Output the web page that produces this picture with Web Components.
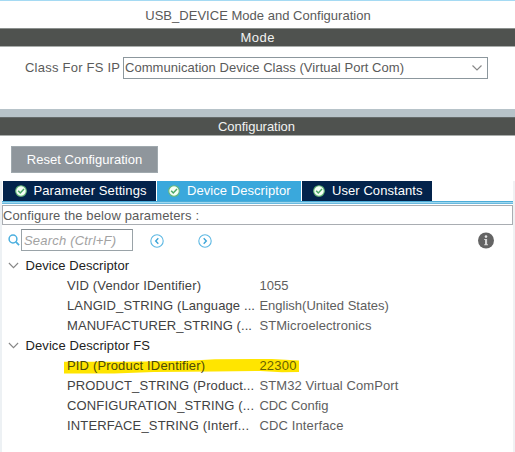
<!DOCTYPE html>
<html lang="en">
<head>
<meta charset="utf-8">
<title>USB_DEVICE Mode and Configuration</title>
<style>
html,body{margin:0;width:515px;height:452px;overflow:hidden;background:#fff}
body{font:13px/20px "Liberation Sans",Arial,sans-serif;color:#5a5a5a}
</style>
</head>
<body>
<config-app></config-app>
<script>
const define = (name, html, setup) => {
  const tpl = document.createElement('template');
  tpl.innerHTML = html;
  customElements.define(name, class extends HTMLElement {
    constructor() {
      super();
      this.attachShadow({mode: 'open'}).append(tpl.content.cloneNode(true));
    }
    connectedCallback() { if (setup) setup(this, this.shadowRoot); }
  });
};

// Label whose tracking is spread so that the text fills the given width.
define('tracked-text', `<style>:host{display:block;white-space:pre;flex:none}span{display:inline-block}</style><span><slot></slot></span>`,
  (el, root) => {
    const span = root.querySelector('span');
    const target = +el.getAttribute('w');
    span.style.letterSpacing = '0';
    const n = el.textContent.length;
    const natural = span.getBoundingClientRect().width;
    const gap = (target - natural) / (n - 1);
    span.style.letterSpacing = gap + 'px';
    span.style.marginRight = -gap + 'px';
  });

define('section-bar', `<style>:host{display:flex;justify-content:center;align-items:center;height:19px;box-sizing:border-box;background:#4f524f;color:#f2f2f2;border-top:1px solid var(--edge,#8b908e);border-bottom:1px solid #a9adab}</style><slot></slot>`);

define('combo-box', `<style>:host{display:flex;align-items:center;justify-content:space-between;width:365px;height:22px;box-sizing:border-box;border:1px solid #8c979d;padding:0 4px 0 1px;background:#fff}svg{display:block}</style>
<slot></slot><svg width="12" height="8" viewBox="0 0 12 8"><path d="M1.5 1.5 6 5.9l4.5-4.4" fill="none" stroke="#888" stroke-width="1.2"/></svg>`);

define('flat-button', `<style>:host{display:flex;align-items:center;justify-content:center;width:147px;height:27px;box-sizing:border-box;background:#8f969c;color:#fff;border:1px solid #a0a9ae}</style><slot></slot>`);

define('check-icon', `<style>:host{display:block;width:12px;height:12px;flex:none}svg{display:block}</style>
<svg width="12" height="12" viewBox="0 0 12 12"><circle cx="6" cy="6" r="5.3" fill="#f5fff5" stroke="#65b878" stroke-width="1.1"/><path d="M3.2 5.7 5.3 8l3.7-3.9" fill="none" stroke="#4ba866" stroke-width="1.5"/></svg>`);

define('config-tab', `<style>:host{display:flex;align-items:center;gap:7px;height:20px;padding-left:11.5px;box-sizing:border-box;background:#03234b;color:#fff}:host([active]){background:#3aa8dc}</style><check-icon></check-icon><slot></slot>`);

define('nav-icon', `<style>:host{display:block;width:14px;height:14px}:host([next]) svg{transform:scaleX(-1)}svg{display:block}</style>
<svg width="14" height="14" viewBox="0 0 14 14"><circle cx="7" cy="7" r="6.2" fill="none" stroke="#5db8e3" stroke-width="1.1"/><path d="M8.3 4.2 5.7 7l2.6 2.8" fill="none" stroke="#3ca5d8" stroke-width="1.4"/></svg>`);

define('search-bar', `<style>
:host{display:flex;align-items:center;height:22px;padding-left:7.5px}
.glass{width:12px;height:12px;margin-right:1.5px}
.field{display:flex;align-items:center;box-sizing:border-box;width:112px;height:22px;border:1px solid #9aa3a8;border-top-color:#858d92;padding:1px 0 0 2px;color:#a2a2a2;font-style:italic}
.prev{margin-left:17px}.next{margin-left:34px}.info{margin-left:266px}
.prev,.next{margin-top:1px}
svg{display:block}</style>
<svg class="glass" viewBox="0 0 12 12"><circle cx="5" cy="5" r="3.9" fill="none" stroke="#4bafdf" stroke-width="1.5"/><path d="m7.9 7.9 3.2 3.2" stroke="#4bafdf" stroke-width="1.7"/></svg>
<div class="field"><tracked-text w="92">Search (Ctrl+F)</tracked-text></div>
<nav-icon class="prev"></nav-icon><nav-icon class="next" next></nav-icon>
<svg class="info" width="16" height="17" viewBox="0 0 16 17"><circle cx="8" cy="8.5" r="8" fill="#646464"/><circle cx="8" cy="4.6" r="1.3" fill="#e4e4e4"/><path d="M6.2 7h2.9v5.3h.9v1H6.2v-1H7V8h-.8z" fill="#d6d6d6"/></svg>`);

define('tree-group', `<style>:host{display:block}.head{display:flex;align-items:center;height:20px;padding-left:5px;gap:6.5px;color:#222}svg{display:block;margin:-2px 0 0 1px}</style>
<div class="head"><svg width="11" height="7" viewBox="0 0 11 7"><path d="M.9 1 5.5 5.6 10.1 1" fill="none" stroke="#858585" stroke-width="1.1"/></svg><slot name="title"></slot></div><slot></slot>`);

define('param-row', `<style>:host{display:grid;grid-template-columns:192.4px 1fr;align-items:center;height:20px;padding-left:65px;position:relative}
svg{display:none;position:absolute;left:62px;top:3px}:host([marked]) svg{display:block}
slot{display:block;position:relative}slot[name=name]{color:#424242}slot[name=value]{color:#5e5e5e}:host([marked]) slot[name=name]{color:#4d4908}:host([marked]) slot[name=value]{color:#696000}</style>
<svg width="235" height="16" viewBox="0 0 235 16"><path d="M0 2.7 L62 2.7 L120 2 L151 .3 L208 0 L235 1.5 V13 L218 13.3 L196 12 L150 12.5 L90 13 L50 14.5 H0Z" fill="#ffe500"/></svg>
<slot name="name"></slot><slot name="value"></slot>`);

const row = (name, nw, value, vw, attr = '') =>
  `<param-row ${attr}><tracked-text slot="name" w="${nw}">${name}</tracked-text><tracked-text slot="value" w="${vw}">${value}</tracked-text></param-row>`;

define('config-app', `<style>
:host{display:flex;flex-direction:column;width:515px;height:452px;box-sizing:border-box;background:#fff;border-top:1px solid #a5daf3}
.title{display:flex;justify-content:center;align-items:center;height:27px;padding:2px 0 0 1px;box-sizing:border-box}
.mode{display:flex;align-items:center;height:62px;box-sizing:border-box;padding:0 0 20px 25px;gap:3px}
.split{height:8px;background:#b7c3c9}
.tools{height:45px;box-sizing:border-box;padding:10px 0 0 11px}
.lower{flex:1;border-left:2px solid #edf1f4;border-right:2px solid #f0f1f3;box-sizing:border-box}
.tabs{display:flex;gap:1px;padding-left:1px}
.rule{height:1px;border-top:1px solid #4cadd8;border-bottom:1px solid #68b9df;background:#a0d8ef}
.note{display:flex;align-items:center;height:20px;box-sizing:border-box;border:1px solid #a9adb2;margin:1px 0 4px;padding-top:2px}
search-bar{margin-bottom:5px;margin-left:-2px}
section-bar{flex:none}
</style>
<div class="title"><tracked-text w="225.5">USB_DEVICE Mode and Configuration</tracked-text></div>
<section-bar><tracked-text w="34">Mode</tracked-text></section-bar>
<div class="mode"><tracked-text w="95">Class For FS IP</tracked-text><combo-box><tracked-text w="279">Communication Device Class (Virtual Port Com)</tracked-text></combo-box></div>
<div class="split"></div>
<section-bar style="--edge:#646a6a"><tracked-text style="margin-right:2px" w="77">Configuration</tracked-text></section-bar>
<div class="tools"><flat-button><tracked-text w="115.5">Reset Configuration</tracked-text></flat-button></div>
<div class="lower">
<div class="tabs">
<config-tab style="width:153px"><tracked-text w="113">Parameter Settings</tracked-text></config-tab>
<config-tab active style="width:144px;padding-left:11px"><tracked-text w="103.5">Device Descriptor</tracked-text></config-tab>
<config-tab style="width:130px;padding-left:11px"><tracked-text w="90.5">User Constants</tracked-text></config-tab>
</div>
<div class="rule"></div>
<div class="note"><tracked-text w="196">Configure the below parameters :</tracked-text></div>
<search-bar></search-bar>
<tree-group><tracked-text slot="title" w="103.5">Device Descriptor</tracked-text>
${row('VID (Vendor IDentifier)', 134, '1055', 29)}
${row('LANGID_STRING (Language ...', 188, 'English(United States)', 129.5)}
${row('MANUFACTURER_STRING (...', 185, 'STMicroelectronics', 112)}
</tree-group>
<tree-group><tracked-text slot="title" w="124.5">Device Descriptor FS</tracked-text>
${row('PID (Product IDentifier)', 138, '22300', 37, 'marked')}
${row('PRODUCT_STRING (Product...', 187, 'STM32 Virtual ComPort', 139)}
${row('CONFIGURATION_STRING (...', 187, 'CDC Config', 69)}
${row('INTERFACE_STRING (Interf...', 182, 'CDC Interface', 84)}
</tree-group>
</div>`);
</script>
</body>
</html>
